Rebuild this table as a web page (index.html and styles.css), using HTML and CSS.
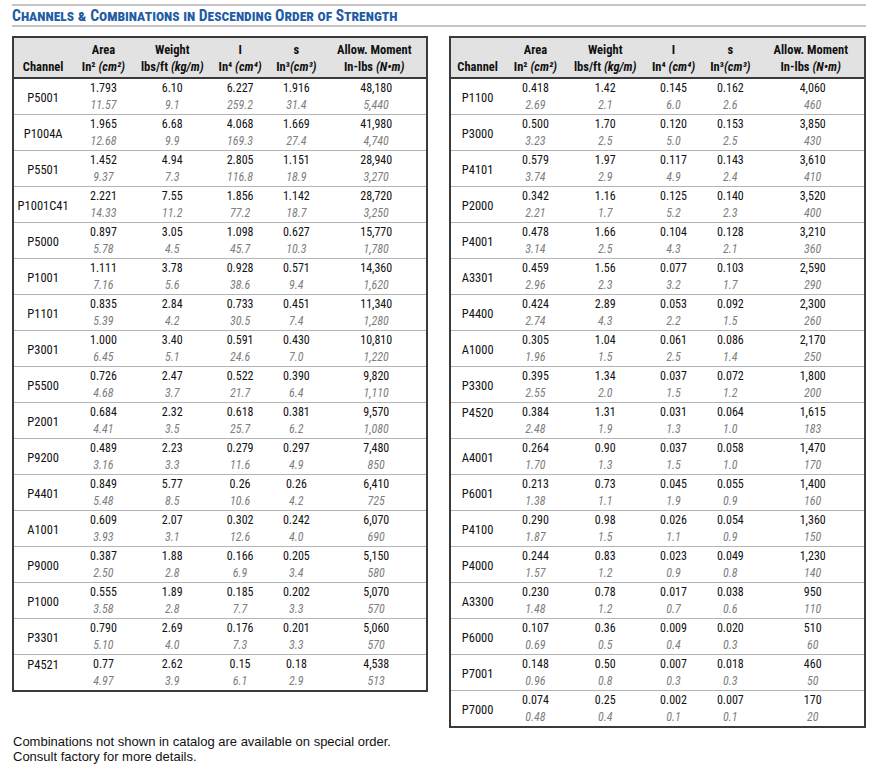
FILE: index.html
```html
<!DOCTYPE html>
<html>
<head>
<meta charset="utf-8">
<link rel="stylesheet" href="styles.css">
</head>
<body>
<div class="page">
  <h1 class="title">Channels &amp; Combinations in Descending Order of Strength</h1>
  <div class="tables">
    <table class="spec left">
      <colgroup><col class="c1"><col class="c2"><col class="c3"><col class="c4"><col class="c5"><col class="c6"></colgroup>
      <thead>
        <tr><th>Channel</th><th>Area<br>In² <em>(cm²)</em></th><th>Weight<br>lbs/ft <em>(kg/m)</em></th><th>I<br>In⁴ <em>(cm⁴)</em></th><th>s<br>In³<em>(cm³)</em></th><th class="am">Allow. Moment<br>In-lbs <em>(N•m)</em></th></tr>
      </thead>
      <tbody>
        <tr><td class="ch">P5001</td><td>1.793<i>11.57</i></td><td>6.10<i>9.1</i></td><td>6.227<i>259.2</i></td><td>1.916<i>31.4</i></td><td class="am">48,180<i>5,440</i></td></tr>
        <tr><td class="ch">P1004A</td><td>1.965<i>12.68</i></td><td>6.68<i>9.9</i></td><td>4.068<i>169.3</i></td><td>1.669<i>27.4</i></td><td class="am">41,980<i>4,740</i></td></tr>
        <tr><td class="ch">P5501</td><td>1.452<i>9.37</i></td><td>4.94<i>7.3</i></td><td>2.805<i>116.8</i></td><td>1.151<i>18.9</i></td><td class="am">28,940<i>3,270</i></td></tr>
        <tr><td class="ch">P1001C41</td><td>2.221<i>14.33</i></td><td>7.55<i>11.2</i></td><td>1.856<i>77.2</i></td><td>1.142<i>18.7</i></td><td class="am">28,720<i>3,250</i></td></tr>
        <tr><td class="ch">P5000</td><td>0.897<i>5.78</i></td><td>3.05<i>4.5</i></td><td>1.098<i>45.7</i></td><td>0.627<i>10.3</i></td><td class="am">15,770<i>1,780</i></td></tr>
        <tr><td class="ch">P1001</td><td>1.111<i>7.16</i></td><td>3.78<i>5.6</i></td><td>0.928<i>38.6</i></td><td>0.571<i>9.4</i></td><td class="am">14,360<i>1,620</i></td></tr>
        <tr><td class="ch">P1101</td><td>0.835<i>5.39</i></td><td>2.84<i>4.2</i></td><td>0.733<i>30.5</i></td><td>0.451<i>7.4</i></td><td class="am">11,340<i>1,280</i></td></tr>
        <tr><td class="ch">P3001</td><td>1.000<i>6.45</i></td><td>3.40<i>5.1</i></td><td>0.591<i>24.6</i></td><td>0.430<i>7.0</i></td><td class="am">10,810<i>1,220</i></td></tr>
        <tr><td class="ch">P5500</td><td>0.726<i>4.68</i></td><td>2.47<i>3.7</i></td><td>0.522<i>21.7</i></td><td>0.390<i>6.4</i></td><td class="am">9,820<i>1,110</i></td></tr>
        <tr><td class="ch">P2001</td><td>0.684<i>4.41</i></td><td>2.32<i>3.5</i></td><td>0.618<i>25.7</i></td><td>0.381<i>6.2</i></td><td class="am">9,570<i>1,080</i></td></tr>
        <tr><td class="ch">P9200</td><td>0.489<i>3.16</i></td><td>2.23<i>3.3</i></td><td>0.279<i>11.6</i></td><td>0.297<i>4.9</i></td><td class="am">7,480<i>850</i></td></tr>
        <tr><td class="ch">P4401</td><td>0.849<i>5.48</i></td><td>5.77<i>8.5</i></td><td>0.26<i>10.6</i></td><td>0.26<i>4.2</i></td><td class="am">6,410<i>725</i></td></tr>
        <tr><td class="ch">A1001</td><td>0.609<i>3.93</i></td><td>2.07<i>3.1</i></td><td>0.302<i>12.6</i></td><td>0.242<i>4.0</i></td><td class="am">6,070<i>690</i></td></tr>
        <tr><td class="ch">P9000</td><td>0.387<i>2.50</i></td><td>1.88<i>2.8</i></td><td>0.166<i>6.9</i></td><td>0.205<i>3.4</i></td><td class="am">5,150<i>580</i></td></tr>
        <tr><td class="ch">P1000</td><td>0.555<i>3.58</i></td><td>1.89<i>2.8</i></td><td>0.185<i>7.7</i></td><td>0.202<i>3.3</i></td><td class="am">5,070<i>570</i></td></tr>
        <tr><td class="ch">P3301</td><td>0.790<i>5.10</i></td><td>2.69<i>4.0</i></td><td>0.176<i>7.3</i></td><td>0.201<i>3.3</i></td><td class="am">5,060<i>570</i></td></tr>
        <tr><td class="ch top">P4521</td><td>0.77<i>4.97</i></td><td>2.62<i>3.9</i></td><td>0.15<i>6.1</i></td><td>0.18<i>2.9</i></td><td class="am">4,538<i>513</i></td></tr>
      </tbody>
    </table>
    <table class="spec right">
      <colgroup><col class="c1"><col class="c2"><col class="c3"><col class="c4"><col class="c5"><col class="c6"></colgroup>
      <thead>
        <tr><th>Channel</th><th>Area<br>In² <em>(cm²)</em></th><th>Weight<br>lbs/ft <em>(kg/m)</em></th><th>I<br>In⁴ <em>(cm⁴)</em></th><th>s<br>In³<em>(cm³)</em></th><th class="am">Allow. Moment<br>In-lbs <em>(N•m)</em></th></tr>
      </thead>
      <tbody>
        <tr><td class="ch">P1100</td><td>0.418<i>2.69</i></td><td>1.42<i>2.1</i></td><td>0.145<i>6.0</i></td><td>0.162<i>2.6</i></td><td class="am">4,060<i>460</i></td></tr>
        <tr><td class="ch">P3000</td><td>0.500<i>3.23</i></td><td>1.70<i>2.5</i></td><td>0.120<i>5.0</i></td><td>0.153<i>2.5</i></td><td class="am">3,850<i>430</i></td></tr>
        <tr><td class="ch">P4101</td><td>0.579<i>3.74</i></td><td>1.97<i>2.9</i></td><td>0.117<i>4.9</i></td><td>0.143<i>2.4</i></td><td class="am">3,610<i>410</i></td></tr>
        <tr><td class="ch">P2000</td><td>0.342<i>2.21</i></td><td>1.16<i>1.7</i></td><td>0.125<i>5.2</i></td><td>0.140<i>2.3</i></td><td class="am">3,520<i>400</i></td></tr>
        <tr><td class="ch">P4001</td><td>0.478<i>3.14</i></td><td>1.66<i>2.5</i></td><td>0.104<i>4.3</i></td><td>0.128<i>2.1</i></td><td class="am">3,210<i>360</i></td></tr>
        <tr><td class="ch">A3301</td><td>0.459<i>2.96</i></td><td>1.56<i>2.3</i></td><td>0.077<i>3.2</i></td><td>0.103<i>1.7</i></td><td class="am">2,590<i>290</i></td></tr>
        <tr><td class="ch">P4400</td><td>0.424<i>2.74</i></td><td>2.89<i>4.3</i></td><td>0.053<i>2.2</i></td><td>0.092<i>1.5</i></td><td class="am">2,300<i>260</i></td></tr>
        <tr><td class="ch">A1000</td><td>0.305<i>1.96</i></td><td>1.04<i>1.5</i></td><td>0.061<i>2.5</i></td><td>0.086<i>1.4</i></td><td class="am">2,170<i>250</i></td></tr>
        <tr><td class="ch">P3300</td><td>0.395<i>2.55</i></td><td>1.34<i>2.0</i></td><td>0.037<i>1.5</i></td><td>0.072<i>1.2</i></td><td class="am">1,800<i>200</i></td></tr>
        <tr><td class="ch top">P4520</td><td>0.384<i>2.48</i></td><td>1.31<i>1.9</i></td><td>0.031<i>1.3</i></td><td>0.064<i>1.0</i></td><td class="am">1,615<i>183</i></td></tr>
        <tr><td class="ch">A4001</td><td>0.264<i>1.70</i></td><td>0.90<i>1.3</i></td><td>0.037<i>1.5</i></td><td>0.058<i>1.0</i></td><td class="am">1,470<i>170</i></td></tr>
        <tr><td class="ch">P6001</td><td>0.213<i>1.38</i></td><td>0.73<i>1.1</i></td><td>0.045<i>1.9</i></td><td>0.055<i>0.9</i></td><td class="am">1,400<i>160</i></td></tr>
        <tr><td class="ch">P4100</td><td>0.290<i>1.87</i></td><td>0.98<i>1.5</i></td><td>0.026<i>1.1</i></td><td>0.054<i>0.9</i></td><td class="am">1,360<i>150</i></td></tr>
        <tr><td class="ch">P4000</td><td>0.244<i>1.57</i></td><td>0.83<i>1.2</i></td><td>0.023<i>0.9</i></td><td>0.049<i>0.8</i></td><td class="am">1,230<i>140</i></td></tr>
        <tr><td class="ch">A3300</td><td>0.230<i>1.48</i></td><td>0.78<i>1.2</i></td><td>0.017<i>0.7</i></td><td>0.038<i>0.6</i></td><td class="am">950<i>110</i></td></tr>
        <tr><td class="ch">P6000</td><td>0.107<i>0.69</i></td><td>0.36<i>0.5</i></td><td>0.009<i>0.4</i></td><td>0.020<i>0.3</i></td><td class="am">510<i>60</i></td></tr>
        <tr><td class="ch">P7001</td><td>0.148<i>0.96</i></td><td>0.50<i>0.8</i></td><td>0.007<i>0.3</i></td><td>0.018<i>0.3</i></td><td class="am">460<i>50</i></td></tr>
        <tr><td class="ch">P7000</td><td>0.074<i>0.48</i></td><td>0.25<i>0.4</i></td><td>0.002<i>0.1</i></td><td>0.007<i>0.1</i></td><td class="am">170<i>20</i></td></tr>
      </tbody>
    </table>
  </div>
  <p class="note">Combinations not shown in catalog are available on special order.<br>Consult factory for more details.</p>
</div>
</body>
</html>
```
FILE: styles.css
```css
html, body {
  margin: 0;
  padding: 0;
  background: #ffffff;
}
.page {
  width: 854px;
  margin-left: 12px;
  padding-top: 4px;
  font-family: "Roboto Condensed", "Liberation Sans", sans-serif;
  color: #111;
}
.title {
  margin: 0;
  border-top: 2px solid #c4c4c4;
  border-bottom: 2px solid #c4c4c4;
  padding: 3px 0 2px;
  font-size: 15.6px;
  line-height: 14px;
  font-weight: bold;
  font-variant: small-caps;
  color: #1f5ca6;
}
.tables {
  display: flex;
  align-items: flex-start;
  gap: 21px;
  margin-top: 9px;
}
.spec {
  border-collapse: collapse;
  border: 2px solid #3a3a3a;
  table-layout: fixed;
  font-size: 12px;
}
.spec.left { width: 416px; }
.spec.right { width: 417px; }
.left .c1 { width: 59px; }
.left .c2 { width: 62px; }
.left .c3 { width: 75px; }
.left .c4 { width: 60px; }
.left .c5 { width: 52px; }
.left .c6 { width: 104px; }
.right .c1 { width: 54px; }
.right .c2 { width: 62px; }
.right .c3 { width: 77px; }
.right .c4 { width: 59px; }
.right .c5 { width: 54px; }
.right .c6 { width: 107px; }
.spec th {
  background: #e2e2e2;
  font-weight: bold;
  font-size: 12.5px;
  line-height: 17px;
  padding: 3px 0 2px;
  vertical-align: bottom;
  text-align: center;
  white-space: nowrap;
  border-bottom: 2px solid #3a3a3a;
}
.spec th em {
  font-style: italic;
}
.spec td {
  text-align: center;
  line-height: 17px;
  padding: 1px 0 0;
  vertical-align: top;
  border-top: 1px solid #b4b4b4;
  white-space: nowrap;
  color: #111;
}
.spec td i {
  display: block;
  color: #7e7e7e;
}
.spec td.ch {
  vertical-align: middle;
  font-size: 12.5px;
}
.spec td.ch.top {
  vertical-align: top;
}
.spec td.am {
  padding-left: 4px;
}
.note {
  margin: 6px 0 0 1px;
  font-family: "Liberation Sans", Arial, sans-serif;
  font-size: 13px;
  line-height: 15px;
  color: #111;
}
```
